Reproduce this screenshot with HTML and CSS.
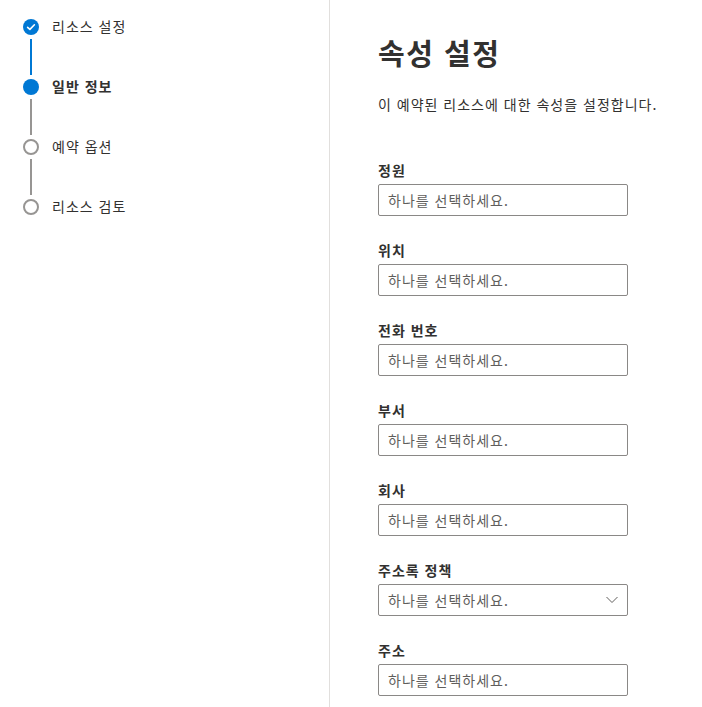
FILE: index.html
```html
<!DOCTYPE html>
<html lang="ko">
<head>
    <meta charset="UTF-8">
    <meta name="viewport" content="width=device-width, initial-scale=1.0">
    <title>속성 설정</title>
    <link rel="stylesheet" href="styles.css">
</head>
<body>
    <div class="layout">
        <nav class="steps">
            <div class="step done">
                <div class="marker">
                    <span class="dot">
                        <svg width="16" height="16" viewBox="0 0 16 16"><path d="M4.6 8.3 L6.9 10.4 L11.4 5.8" fill="none" stroke="#fff" stroke-width="1.6" stroke-linecap="round" stroke-linejoin="round"/></svg>
                    </span>
                    <span class="line blue"></span>
                </div>
                <span class="step-label">리소스 설정</span>
            </div>
            <div class="step current">
                <div class="marker">
                    <span class="dot"></span>
                    <span class="line"></span>
                </div>
                <span class="step-label">일반 정보</span>
            </div>
            <div class="step">
                <div class="marker">
                    <span class="dot"></span>
                    <span class="line"></span>
                </div>
                <span class="step-label">예약 옵션</span>
            </div>
            <div class="step">
                <div class="marker">
                    <span class="dot"></span>
                </div>
                <span class="step-label">리소스 검토</span>
            </div>
        </nav>

        <main class="panel">
            <h1>속성 설정</h1>
            <p class="desc">이 예약된 리소스에 대한 속성을 설정합니다.</p>

            <div class="field">
                <label>정원</label>
                <input type="text" placeholder="하나를 선택하세요.">
            </div>
            <div class="field">
                <label>위치</label>
                <input type="text" placeholder="하나를 선택하세요.">
            </div>
            <div class="field">
                <label>전화 번호</label>
                <input type="text" placeholder="하나를 선택하세요.">
            </div>
            <div class="field">
                <label>부서</label>
                <input type="text" placeholder="하나를 선택하세요.">
            </div>
            <div class="field">
                <label>회사</label>
                <input type="text" placeholder="하나를 선택하세요.">
            </div>
            <div class="field">
                <label>주소록 정책</label>
                <div class="dropdown">
                    <span>하나를 선택하세요.</span>
                    <svg width="12" height="8" viewBox="0 0 12 8"><path d="M0.5 1 L6 6.5 L11.5 1" fill="none" stroke="#605e5c" stroke-width="1"/></svg>
                </div>
            </div>
            <div class="field">
                <label>주소</label>
                <input type="text" placeholder="하나를 선택하세요.">
            </div>
        </main>
    </div>
</body>
</html>
```

FILE: styles.css
```css
body { margin: 0; font-family: "Noto Sans CJK KR", "Noto Sans", sans-serif; font-size: 14px; letter-spacing: 1px; color: #323130; background: #fff; overflow: hidden; }
.layout { display: flex; min-height: 100vh; }

.steps { width: 330px; flex-shrink: 0; border-right: 1px solid #e1dfdd; padding: 19px 0 0 23px; box-sizing: border-box; }
.step { display: flex; align-items: flex-start; gap: 13px; }
.marker { display: flex; flex-direction: column; align-items: center; width: 16px; }
.dot { width: 16px; height: 16px; border-radius: 50%; box-sizing: border-box; border: 2px solid #979593; background: #fff; display: block; }
.dot svg { display: block; }
.step.done .dot, .step.current .dot { background: #0078d4; border: none; }
.line { width: 2px; height: 36px; margin: 4px 0; background: #979593; display: block; }
.line.blue { background: #0078d4; }
.step-label { line-height: 20px; margin-top: -3px; }
.step.current .step-label { font-weight: 700; }

.panel { flex: 1; padding: 34px 0 0 48px; }
.panel h1 { margin: 0 0 24px; font-size: 29px; line-height: 36px; font-weight: 700; letter-spacing: 1.5px; }
.desc { margin: 0 0 46px; line-height: 20px; white-space: nowrap; }

.field { margin-bottom: 24px; }
.field label { display: block; line-height: 20px; font-weight: 700; margin-bottom: 4px; }
.field input, .dropdown { width: 250px; height: 32px; box-sizing: border-box; border: 1px solid #8a8886; border-radius: 2px; padding: 0 9px; font-family: inherit; font-size: 14px; letter-spacing: 1px; color: #323130; background: #fff; outline: none; }
.field input::placeholder { color: #605e5c; }
.dropdown { display: flex; align-items: center; justify-content: space-between; color: #605e5c; padding-right: 9px; }
.dropdown svg { display: block; }
```
